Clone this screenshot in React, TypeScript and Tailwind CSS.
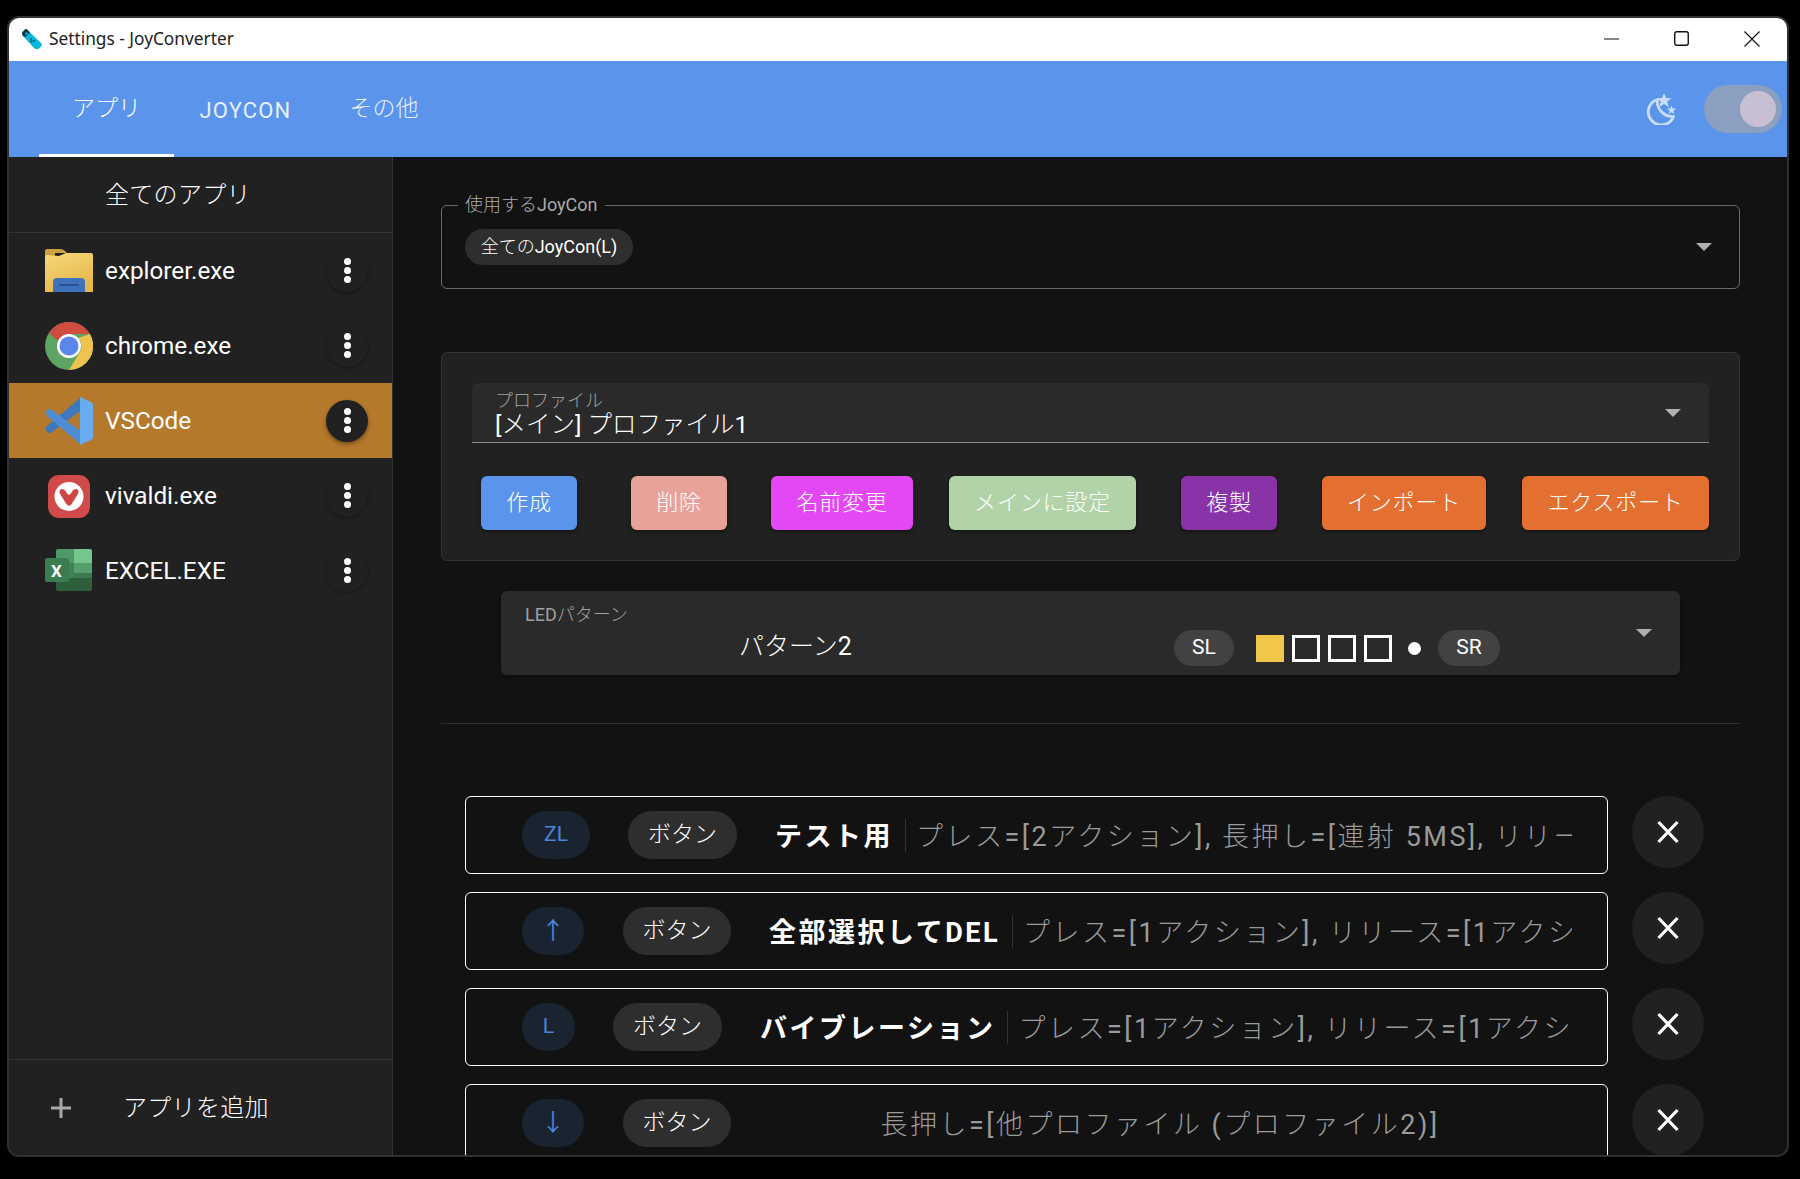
import React from "react";

const Arrow = ({ className = "" }: { className?: string }) => (
  <svg width="16" height="8" viewBox="0 0 16 8" className={className}>
    <path d="M0 0H16L8 8Z" fill="#b0b0b0" />
  </svg>
);

const Mixed = ({ text }: { text: string }) => (
  <>
    {text.split(/([\x20-\x7e]+)/).map((part, i) =>
      i % 2 === 1 ? (
        <span key={i} className="font-normal">{part}</span>
      ) : (
        <span key={i}>{part}</span>
      )
    )}
  </>
);

const Folder = () => (
  <svg width="48" height="44" viewBox="0 0 48 44">
    <defs>
      <linearGradient id="fg" x1="0" y1="0" x2="0.4" y2="1">
        <stop offset="0" stopColor="#f6d978" />
        <stop offset="1" stopColor="#e6b84c" />
      </linearGradient>
    </defs>
    <path d="M0 2Q0 0 2 0H15Q18 0 20 2L22 4H10V12H0Z" fill="#cfa13e" />
    <path d="M0 8Q0 6 2 6L14 7L21 4H46Q48 4 48 6V43H0Z" fill="url(#fg)" />
    <path d="M8 43V33Q8 29 12 29H36Q40 29 40 33V43Z" fill="#3f72bd" />
    <rect x="14" y="35" width="20" height="2" fill="#2a5292" />
  </svg>
);

const Chrome = () => (
  <svg width="48" height="48" viewBox="0 0 48 48">
    <circle cx="24" cy="24" r="24" fill="#5ea463" />
    <path d="M24 0A24 24 0 0 1 45 12H24A12 12 0 0 0 13 19L4 11A24 24 0 0 1 24 0Z" fill="#cf4c3f" />
    <path d="M45 12A24 24 0 0 1 24 48L35 30A12 12 0 0 0 33 16Z" fill="#eec44f" />
    <circle cx="24" cy="24" r="12" fill="#ffffff" />
    <circle cx="24" cy="24" r="9.5" fill="#5b86ea" />
  </svg>
);

const VSCode = () => (
  <svg width="48" height="48" viewBox="0 0 48 48">
    <path d="M35 1V14L7 35Q4 37 2 35L1 33Q0 31 2 29Z" fill="#3f78bd" />
    <path d="M2 13Q4 11 7 13L35 34V47L2 19Q0 16 2 13Z" fill="#4e8dd4" />
    <path d="M35 0L46 5Q48 6 48 8V40Q48 42 46 43L35 48Z" fill="#66acef" />
  </svg>
);

const Vivaldi = () => (
  <svg width="48" height="48" viewBox="0 0 48 48">
    <rect x="3" y="3" width="42" height="43" rx="11" fill="#d04a4a" />
    <circle cx="24" cy="24.500" r="14.500" fill="#ffffff" />
    <path d="M14.500 19Q15.500 16 19 17.500Q20.500 18.500 21.500 20.500Q24 25 26.500 20.500Q27.500 18.500 29 17.500Q32.500 16 33.500 19Q34 21 32 23.500L27 31.500Q24 36 21 31.500L16 23.500Q14 21 14.500 19Z" fill="#cf4647" />
  </svg>
);

const Excel = () => (
  <svg width="48" height="44" viewBox="0 0 48 44">
    <path d="M11 2Q11 0 13 0H29V14H11Z" fill="#4d9a68" />
    <path d="M29 0H45Q47 0 47 2V14H29Z" fill="#74c68c" />
    <rect x="11" y="14" width="18" height="15" fill="#3f8258" />
    <rect x="29" y="14" width="18" height="10" fill="#539f6d" />
    <rect x="29" y="24" width="18" height="10" fill="#3c7a4e" />
    <path d="M11 29H47V40Q47 42 45 42H13Q11 42 11 40Z" fill="#2f5e3d" />
    <rect x="0" y="9" width="24" height="24" rx="2" fill="#3a7d50" />
  </svg>
);

const More = ({ active }: { active?: boolean }) => (
  <div className={`flex h-[42px] w-[42px] shrink-0 flex-col items-center justify-center gap-[2px] rounded-full bg-[#212121] ${active ? "shadow-[0_2px_4px_rgba(0,0,0,0.4)]" : "shadow-[0_1px_3px_rgba(0,0,0,0.35)]"}`}>
    <span className="h-[7px] w-[7px] rounded-full bg-white" />
    <span className="h-[7px] w-[7px] rounded-full bg-white" />
    <span className="h-[7px] w-[7px] rounded-full bg-white" />
  </div>
);

const apps = [
  { name: "explorer.exe", icon: <Folder /> },
  { name: "chrome.exe", icon: <Chrome /> },
  { name: "VSCode", icon: <VSCode />, active: true },
  { name: "vivaldi.exe", icon: <Vivaldi /> },
  { name: "EXCEL.EXE", icon: <Excel />, excel: true },
];

const AppRow = ({ name, icon, active, excel }: { name: string; icon: React.ReactNode; active?: boolean; excel?: boolean }) => (
  <div className={`flex h-[75px] items-center pl-[36px] pr-[24px] ${active ? "bg-[#b5792c]" : ""}`}>
    <div className="relative flex w-[48px] shrink-0 justify-center">
      {icon}
      {excel && <span className="absolute left-[6px] top-[12px] text-[17px] font-bold leading-[20px] text-white">X</span>}
    </div>
    <span className="ml-[12px] flex-1 text-[24.300px] font-normal leading-[30px] text-white">{name}</span>
    <More active={active} />
  </div>
);

const buttons = [
  { t: "作成", c: "ml-0 w-[96px] bg-[#5a94eb]" },
  { t: "削除", c: "ml-[54px] w-[96px] bg-[#e9a298]" },
  { t: "名前変更", c: "ml-[44px] w-[142px] bg-[#e348f4]" },
  { t: "メインに設定", c: "ml-[36px] w-[187px] bg-[#b2d3a8]" },
  { t: "複製", c: "ml-[45px] w-[96px] bg-[#8933a8]" },
  { t: "インポート", c: "ml-[45px] w-[164px] bg-[#e37030]" },
  { t: "エクスポート", c: "ml-[36px] w-[187px] bg-[#e37030]" },
];

const rows = [
  { k: "ZL", kc: "w-[68px] text-[21px]", bm: "ml-[38px]", bc: "w-[109px]", title: "テスト用", desc: "プレス=[2アクション], 長押し=[連射 5MS], リリース=[1アクション]" },
  { k: "↑", kc: "w-[62px] text-[24px]", bm: "ml-[39px]", bc: "w-[108px]", title: "全部選択してDEL", desc: "プレス=[1アクション], リリース=[1アクション]" },
  { k: "L", kc: "w-[53px] text-[21px]", bm: "ml-[38px]", bc: "w-[109px]", title: "バイブレーション", desc: "プレス=[1アクション], リリース=[1アクション]" },
  { k: "↓", kc: "w-[62px] text-[24px]", bm: "ml-[39px]", bc: "w-[108px]", title: "", desc: "長押し=[他プロファイル (プロファイル2)]" },
];

const Row = ({ k, kc, bm, bc, title, desc }: { k: string; kc: string; bm: string; bc: string; title: string; desc: string }) => (
  <div className="flex shrink-0 items-start gap-[24px]">
    <div className="flex h-[78px] w-[1143px] shrink-0 items-center rounded-[6px] border border-white pl-[56px]">
      <span className={`flex h-[48px] shrink-0 items-center justify-center rounded-full bg-[#1a2330] font-normal text-[#4a85d8] ${kc}`}>{k}</span>
      <span className={`flex h-[48px] shrink-0 items-center justify-center rounded-full bg-[#2e2e2e] text-[23px] text-white ${bm} ${bc}`}>ボタン</span>
      <div className={`ml-[17px] mr-[35px] flex min-w-0 flex-1 items-center overflow-hidden whitespace-nowrap pt-[4px] text-[27px] tracking-[2.500px] ${title ? "pl-[21px]" : "justify-center"}`}>
        {title && <span className="shrink-0 font-bold text-white">{title}</span>}
        {title && <span className="ml-[12px] mr-[10px] mt-[-4px] h-[33px] w-px shrink-0 bg-[#2b3a2b]" />}
        <span className="shrink-0 text-[#9a9a9a]"><Mixed text={desc} /></span>
      </div>
    </div>
    <div className="flex h-[72px] w-[72px] shrink-0 items-center justify-center rounded-full bg-[#212121]">
      <svg width="24" height="24" viewBox="0 0 24 24">
        <path d="M2.500 2L21.500 22M21.500 2L2.500 22" stroke="#ffffff" strokeWidth="3.200" fill="none" />
      </svg>
    </div>
  </div>
);

export default function App() {
  return (
    <div className="h-[1179px] w-[1800px] overflow-hidden bg-black pl-[7px] pt-[16px] font-['Roboto','Noto_Sans_CJK_JP',sans-serif] font-light">
      <div className="flex h-[1141px] w-[1782px] flex-col overflow-hidden rounded-[12px] border-2 border-[#303030] bg-[#121212]">
        <div className="flex h-[43px] shrink-0 items-center bg-white pb-[2px] pl-[13px]">
          <svg width="20" height="20" viewBox="0 0 20 20">
            <path d="M3 0.500Q4 -0.300 5 0.500L19.500 14.500Q20 15.500 19.500 17L17 19.500Q15 20.500 12.500 19.500L1 7Q-0.500 5 0.500 3Z" fill="#05b7dc" />
            <path d="M0.500 3L3 0.500Q4 -0.300 5 0.500L8 3.500L3.500 8L1 7Q-0.500 5 0.500 3Z" fill="#123844" />
            <circle cx="4.500" cy="4.500" r="1.300" fill="#05b7dc" />
            <rect x="8.500" y="9" width="1.600" height="1.600" fill="#123844" />
            <rect x="11" y="11" width="1.600" height="1.600" fill="#123844" />
            <rect x="8.500" y="11.500" width="1.600" height="1.600" fill="#123844" />
          </svg>
          <span className="ml-[7px] flex-1 font-['Noto_Sans'] text-[17.300px] font-normal text-[#222222]">Settings - JoyConverter</span>
          <svg width="15" height="2" viewBox="0 0 15 2" className="mr-[55px]"><rect width="15" height="1" y="0.500" fill="#111111" /></svg>
          <svg width="15" height="15" viewBox="0 0 15 15" className="mr-[55px]"><rect x="0.750" y="0.750" width="13.500" height="13.500" rx="2" fill="none" stroke="#111111" strokeWidth="1.400" /></svg>
          <svg width="16" height="16" viewBox="0 0 16 16" className="mr-[27px]"><path d="M0.500 0.500L15.500 15.500M15.500 0.500L0.500 15.500" stroke="#111111" strokeWidth="1.200" /></svg>
        </div>

        <div className="flex h-[96px] shrink-0 items-stretch bg-[#5a94eb] pl-[30px]">
          <div className="flex w-[135px] items-center justify-center border-b-[3px] border-white pt-[3px] text-[23px] text-white">アプリ</div>
          <div className="flex w-[143px] items-center justify-center pt-[3px] text-[22px] font-normal tracking-[1.200px] text-[#e7effc]">JOYCON</div>
          <div className="flex w-[134px] items-center justify-center text-[23px] text-[#e7effc]">その他</div>
          <div className="flex-1" />
          <div className="flex items-center pr-[5px]">
            <svg width="30" height="32" viewBox="0 0 30 32" className="mr-[28px] mt-[-1px]">
              <path d="M11.500 6.500A13 13 0 1 0 27.500 23.500A15 15 0 0 1 11.500 6.500Z" fill="none" stroke="#c9dcfb" strokeWidth="2.800" strokeLinejoin="round" />
              <path d="M18 0L20 5L25.500 5.300L21.200 8.600L22.700 14L18 11L13.300 14L14.800 8.600L10.500 5.300L16 5Z" fill="#c9dcfb" />
              <path d="M25.500 12.500L26.700 15.500L30 15.700L27.400 17.800L28.300 21L25.500 19.200L22.700 21L23.600 17.800L21 15.700L24.300 15.500Z" fill="#c9dcfb" />
            </svg>
            <div className="flex h-[48px] w-[78px] items-center justify-end rounded-full bg-[#8b9fc0] pr-[6px]">
              <span className="h-[36px] w-[36px] rounded-full bg-[#c9bfd2]" />
            </div>
          </div>
        </div>

        <div className="flex min-h-0 flex-1">
          <div className="flex w-[384px] shrink-0 flex-col border-r border-[#333333] bg-[#212121]">
            <div className="flex h-[76px] shrink-0 items-center border-b border-[#333333] pl-[96px] text-[24px] tracking-[0.300px] text-white">全てのアプリ</div>
            {apps.map((a) => (
              <AppRow key={a.name} {...a} />
            ))}
            <div className="flex-1" />
            <div className="flex h-[96px] shrink-0 items-center border-t border-[#333333] pl-[42px] text-[24px] tracking-[0.300px] text-white">
              <svg width="20" height="20" viewBox="0 0 20 20"><path d="M0 10H20M10 0V20" stroke="#a8a8a8" strokeWidth="3" /></svg>
              <span className="ml-[52px]">アプリを追加</span>
            </div>
          </div>

          <div className="flex min-w-0 flex-1 flex-col overflow-hidden pl-[48px] pr-[47px] pt-[48px]">
            <div className="relative flex h-[84px] shrink-0 items-center justify-between rounded-[6px] border border-[#6a6a6a] pl-[23px] pr-[27px]">
              <span className="absolute left-[16px] top-[-13px] bg-[#121212] px-[7px] text-[18px] leading-[24px] text-[#aaaaaa]"><Mixed text="使用するJoyCon" /></span>
              <span className="mt-[-1px] flex h-[36px] w-[168px] items-center justify-center rounded-full bg-[#2e2e2e] text-[18px] text-white"><Mixed text="全てのJoyCon(L)" /></span>
              <Arrow />
            </div>

            <div className="mt-[63px] h-[209px] shrink-0 rounded-[6px] border border-[#333333] bg-[#212121] px-[30px] pt-[30px]">
              <div className="relative h-[60px] rounded-t-[6px] border-b border-[#888888] bg-[#2a2a2a] pl-[23px]">
                <div className="pt-[7px] text-[18px] leading-[22px] text-[#a0a0a0]">プロファイル</div>
                <div className="mt-[-1px] text-[24.500px] leading-[28px] text-white"><Mixed text="[メイン] プロファイル1" /></div>
                <Arrow className="absolute right-[28px] top-[26px]" />
              </div>
              <div className="mt-[33px] flex pl-[9px]">
                {buttons.map((b) => (
                  <div key={b.t} className={`flex h-[54px] shrink-0 items-center justify-center rounded-[6px] pb-[2px] text-[22px] tracking-[0.800px] text-white shadow-[0_2px_4px_rgba(0,0,0,0.4)] ${b.c}`}>{b.t}</div>
                ))}
              </div>
            </div>

            <div className="relative ml-[60px] mr-[60px] mt-[30px] h-[84px] shrink-0 rounded-[6px] bg-[#2a2a2a] pl-[24px] shadow-[0_2px_4px_rgba(0,0,0,0.3)]">
              <div className="pt-[12px] text-[18px] leading-[24px] text-[#a0a0a0]"><Mixed text="LEDパターン" /></div>
              <div className="mt-[3px] flex h-[36px] items-center">
                <span className="ml-[214px] mt-[-2px] w-[435px] text-[25px] text-white">パターン<span className="font-normal">2</span></span>
                <span className="flex h-[36px] w-[60px] items-center justify-center rounded-full bg-[#424242] text-[21px] font-normal text-white">SL</span>
                <span className="ml-[22px] h-[27px] w-[28px] bg-[#f0c748]" />
                <span className="ml-[8px] h-[27px] w-[28px] border-[3px] border-white" />
                <span className="ml-[8px] h-[27px] w-[28px] border-[3px] border-white" />
                <span className="ml-[8px] h-[27px] w-[28px] border-[3px] border-white" />
                <span className="ml-[16px] h-[13px] w-[13px] rounded-full bg-white" />
                <span className="ml-[17px] flex h-[36px] w-[62px] items-center justify-center rounded-full bg-[#424242] text-[21px] font-normal text-white">SR</span>
              </div>
              <Arrow className="absolute right-[28px] top-[38px]" />
            </div>

            <div className="mt-[48px] h-px shrink-0 bg-[#2e2e2e]" />

            <div className="mt-[72px] flex flex-col gap-[18px] pl-[24px]">
              {rows.map((r) => (
                <Row key={r.k} {...r} />
              ))}
            </div>
          </div>
        </div>
      </div>
    </div>
  );
}
